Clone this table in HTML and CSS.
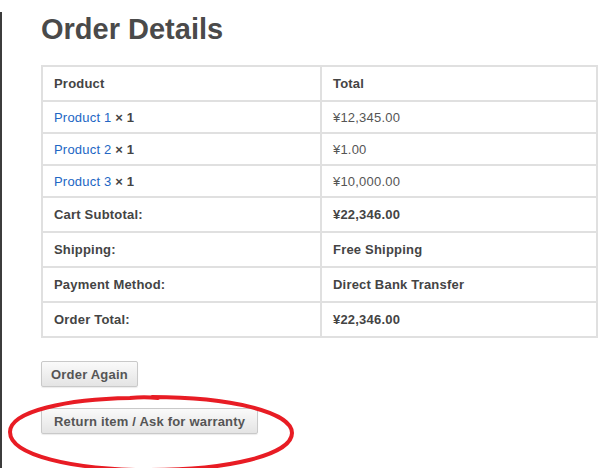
FILE: index.html
```html
<!DOCTYPE html>
<html>
<head>
<meta charset="utf-8">
<link rel="stylesheet" href="styles.css">
</head>
<body>
<div class="page">
  <h1 class="title">Order Details</h1>
  <table class="order">
    <thead>
      <tr class="row-head"><th class="col-product">Product</th><th>Total</th></tr>
    </thead>
    <tbody>
      <tr class="row-item"><td><a href="#" class="link">Product 1</a> <strong>× 1</strong></td><td>¥12,345.00</td></tr>
      <tr class="row-item"><td><a href="#" class="link">Product 2</a> <strong>× 1</strong></td><td>¥1.00</td></tr>
      <tr class="row-item"><td><a href="#" class="link">Product 3</a> <strong>× 1</strong></td><td>¥10,000.00</td></tr>
    </tbody>
    <tfoot>
      <tr class="row-foot"><th>Cart Subtotal:</th><td>¥22,346.00</td></tr>
      <tr class="row-foot"><th>Shipping:</th><td>Free Shipping</td></tr>
      <tr class="row-foot"><th>Payment Method:</th><td>Direct Bank Transfer</td></tr>
      <tr class="row-foot"><th>Order Total:</th><td>¥22,346.00</td></tr>
    </tfoot>
  </table>
  <div class="actions">
    <button class="btn">Order Again</button>
    <button class="btn btn-wide">Return item / Ask for warranty</button>
  </div>
  <svg class="circle" width="300" height="90" viewBox="0 0 300 90">
    <path d="M150 5 C228 5 290 20 290 41 C290 63 226 78 148 78 C70 78 8 63 8 40 C8 19 66 7 128 6 C138 5 146 5 156 6" fill="none" stroke="#e81c24" stroke-width="4" stroke-linecap="round"/>
  </svg>
</div>
</body>
</html>
```

FILE: styles.css
```css
html, body {
  margin: 0;
  padding: 0;
  background: #fff;
}
body {
  font-family: "Liberation Sans", Arial, sans-serif;
  font-size: 13px;
  letter-spacing: 0.2px;
  color: #555;
}
.page {
  position: relative;
  border-left: 2px solid #3c3c3c;
  padding-left: 39px;
  min-height: 468px;
  box-sizing: border-box;
}
.title {
  margin: 12px 0 19px;
  font-size: 29px;
  line-height: 34px;
  font-weight: bold;
  letter-spacing: 0;
  color: #4a4a4a;
}
.order {
  width: 557px;
  border-collapse: collapse;
  border: 2px solid #e0e0e0;
}
.order th, .order td {
  border: 2px solid #e0e0e0;
  padding: 0 11px;
  text-align: left;
  vertical-align: middle;
}
.order th {
  font-weight: bold;
  color: #444;
}
.col-product {
  width: 255px;
}
.row-head { height: 35px; }
.row-item { height: 32px; }
.row-foot { height: 35px; }
.row-foot td {
  font-weight: bold;
  color: #444;
}
.row-item strong {
  color: #444;
}
.link {
  color: #2266c4;
  text-decoration: none;
}
.actions {
  display: flex;
  flex-direction: column;
  align-items: flex-start;
  gap: 21px;
  margin-top: 23px;
}
.btn {
  font-family: "Liberation Sans", Arial, sans-serif;
  font-size: 13px;
  font-weight: bold;
  letter-spacing: 0.2px;
  color: #555;
  height: 26px;
  padding: 0 9px;
  border: 1px solid #c9c9c9;
  border-radius: 2px;
  background: linear-gradient(#fafafa, #e4e4e4);
  box-shadow: 0 1px 1px rgba(0,0,0,0.08);
  margin: 0;
}
.btn-wide {
  padding: 0 12px;
}
.circle {
  position: absolute;
  left: 0;
  top: 380px;
}
```
